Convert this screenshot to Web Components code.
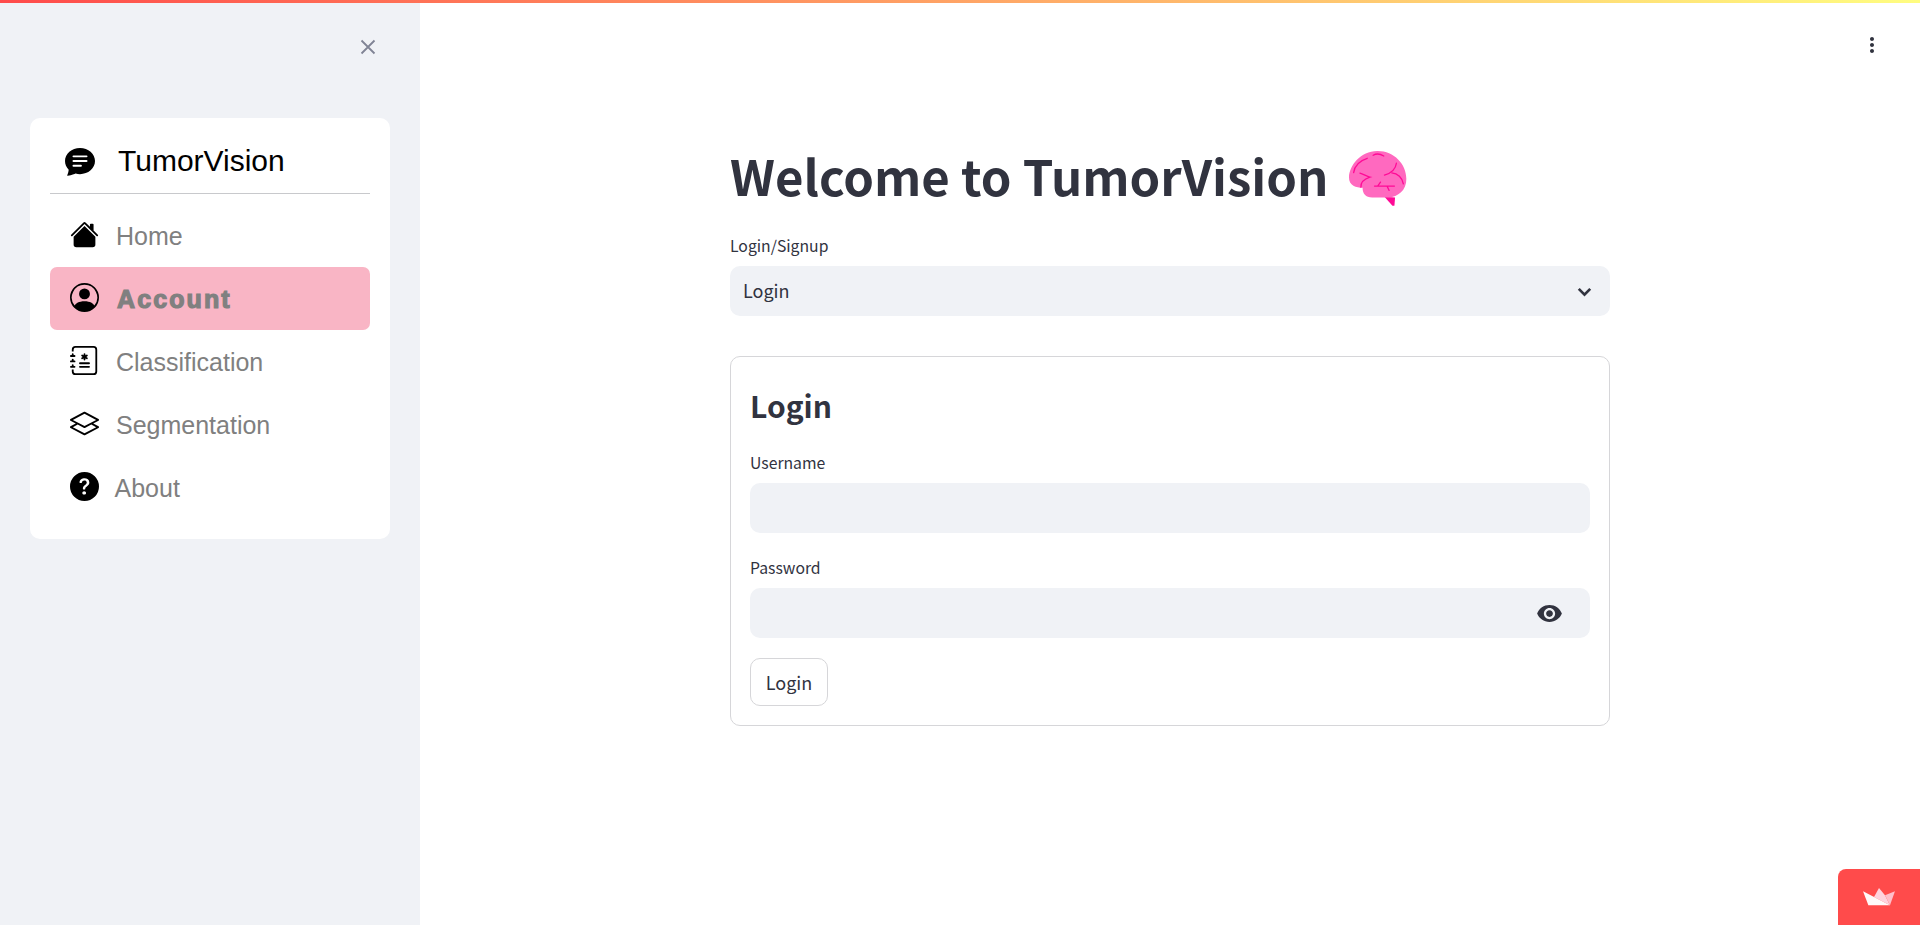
<!DOCTYPE html>
<html lang="en">
<head>
<meta charset="utf-8">
<title>TumorVision</title>
<style>
  html, body { margin: 0; height: 100%; overflow: hidden; background: #fff; }
  body { font-family: "Noto Sans CJK SC", "Liberation Sans", sans-serif; color: #31333f; }
</style>
</head>
<body>
<st-app>
  <option-menu slot="sidebar" title="TumorVision">
    <nav-item icon="house">Home</nav-item>
    <nav-item icon="account" active>Account</nav-item>
    <nav-item icon="journal">Classification</nav-item>
    <nav-item icon="layers">Segmentation</nav-item>
    <nav-item icon="question" tight>About</nav-item>
  </option-menu>

  <main-title>Welcome to TumorVision</main-title>
  <st-select label="Login/Signup" value="Login"></st-select>
  <st-form title="Login">
    <st-field label="Username"></st-field>
    <st-field label="Password" type="password"></st-field>
    <st-button>Login</st-button>
  </st-form>
</st-app>

<script>
(function() {
  // bootstrap-icons paths, 16x16
  let icons = {
    chat: '<path d="M16 8c0 3.866-3.582 7-8 7a9.06 9.06 0 0 1-2.347-.306c-.584.296-1.925.864-4.181 1.234-.2.032-.352-.176-.273-.362.354-.836.674-1.95.77-2.966C.744 11.37 0 9.76 0 8c0-3.866 3.582-7 8-7s8 3.134 8 7zM4.5 5a.5.5 0 0 0 0 1h7a.5.5 0 0 0 0-1h-7zm0 2.5a.5.5 0 0 0 0 1h7a.5.5 0 0 0 0-1h-7zm0 2.5a.5.5 0 0 0 0 1h4a.5.5 0 0 0 0-1h-4z"/>',
    house: '<path d="M8.707 1.5a1 1 0 0 0-1.414 0L.646 8.146a.5.5 0 0 0 .708.708L8 2.207l6.646 6.647a.5.5 0 0 0 .708-.708L13 5.793V2.5a.5.5 0 0 0-.5-.5h-1a.5.5 0 0 0-.5.5v1.293L8.707 1.5Z"/><path d="m8 3.293 6 6V13.5a1.5 1.5 0 0 1-1.5 1.5h-9A1.5 1.5 0 0 1 2 13.5V9.293l6-6Z"/>',
    account: '<path d="M11 6a3 3 0 1 1-6 0 3 3 0 0 1 6 0z"/><path fill-rule="evenodd" d="M0 8a8 8 0 1 1 16 0A8 8 0 0 1 0 8zm8-7a7 7 0 0 0-5.468 11.37C3.242 11.226 4.805 10 8 10s4.757 1.225 5.468 2.37A7 7 0 0 0 8 1z"/>',
    journal: '<path fill-rule="evenodd" d="M8 4a.5.5 0 0 1 .5.5v.634l.549-.317a.5.5 0 1 1 .5.866L9 6l.549.317a.5.5 0 1 1-.5.866L8.5 6.866V7.5a.5.5 0 0 1-1 0v-.634l-.549.317a.5.5 0 1 1-.5-.866L7 6l-.549-.317a.5.5 0 0 1 .5-.866l.549.317V4.5A.5.5 0 0 1 8 4zM5 9.5a.5.5 0 0 1 .5-.5h5a.5.5 0 0 1 0 1h-5a.5.5 0 0 1-.5-.5zm0 2a.5.5 0 0 1 .5-.5h5a.5.5 0 0 1 0 1h-5a.5.5 0 0 1-.5-.5z"/><path d="M3 0h10a2 2 0 0 1 2 2v12a2 2 0 0 1-2 2H3a2 2 0 0 1-2-2v-1h1v1a1 1 0 0 0 1 1h10a1 1 0 0 0 1-1V2a1 1 0 0 0-1-1H3a1 1 0 0 0-1 1v1H1V2a2 2 0 0 1 2-2z"/><path d="M1 5v-.5a.5.5 0 0 1 1 0V5h.5a.5.5 0 0 1 0 1h-2a.5.5 0 0 1 0-1H1zm0 3v-.5a.5.5 0 0 1 1 0V8h.5a.5.5 0 0 1 0 1h-2a.5.5 0 0 1 0-1H1zm0 3v-.5a.5.5 0 0 1 1 0v.5h.5a.5.5 0 0 1 0 1h-2a.5.5 0 0 1 0-1H1z"/>',
    layers: '<path d="M8.235 1.559a.5.5 0 0 0-.47 0l-7.5 4a.5.5 0 0 0 0 .882L3.188 8 .264 9.559a.5.5 0 0 0 0 .882l7.5 4a.5.5 0 0 0 .47 0l7.5-4a.5.5 0 0 0 0-.882L12.813 8l2.922-1.559a.5.5 0 0 0 0-.882l-7.5-4zm3.515 7.008L14.438 10 8 13.433 1.562 10 4.25 8.567l3.515 1.874a.5.5 0 0 0 .47 0l3.515-1.874zM8 9.433 1.562 6 8 2.567 14.438 6 8 9.433z"/>',
    question: '<path d="M16 8A8 8 0 1 1 0 8a8 8 0 0 1 16 0zM5.496 6.033h.825c.138 0 .248-.113.266-.25.09-.656.54-1.134 1.342-1.134.686 0 1.314.343 1.314 1.168 0 .635-.374.927-.965 1.371-.673.489-1.206 1.06-1.168 1.987l.003.217a.25.25 0 0 0 .25.246h.811a.25.25 0 0 0 .25-.25v-.105c0-.718.273-.927 1.01-1.486.609-.463 1.244-.977 1.244-2.056 0-1.511-1.276-2.241-2.673-2.241-1.267 0-2.655.59-2.75 2.286a.237.237 0 0 0 .241.247zm2.325 6.443c.61 0 1.029-.394 1.029-.927 0-.552-.42-.94-1.029-.94-.584 0-1.009.388-1.009.94 0 .533.425.927 1.01.927z"/>'
  };

  function define(name, html) {
    customElements.define(name, class extends HTMLElement {
      constructor() {
        super();
        this.attachShadow({mode: 'open'}).innerHTML = typeof html == 'function' ? html(this) : html;
      }
    });
  }

  define('st-app', `
    <style>
      :host { display: flex; flex-direction: column; height: 100vh; position: relative; }
      .bar { height: 3px; flex: none; background: linear-gradient(90deg, #ff4b4b, #fffd80); }
      .row { flex: 1; display: flex; min-height: 0; }
      aside { width: 420px; flex: none; box-sizing: border-box; background: #f0f2f6; padding: 32px 30px 0; }
      .close { display: flex; justify-content: flex-end; height: 83px; padding-right: 10px; }
      .close svg { width: 24px; height: 24px; fill: none; stroke: #808495; stroke-width: 1.8; }
      main { flex: 1; display: flex; justify-content: center; }
      .block { width: 880px; display: flex; flex-direction: column; }
      .menu { position: absolute; top: 33px; right: 36px; width: 24px; height: 24px; fill: #31333f; }
      .badge { position: absolute; right: 0; bottom: 0; width: 82px; height: 56px; background: #ff4b4b; border-top-left-radius: 8px; display: flex; align-items: center; justify-content: center; }
      .badge svg { width: 32px; height: 17.3px; }
    </style>
    <div class="bar"></div>
    <div class="row">
      <aside>
        <div class="close"><svg viewBox="0 0 24 24"><path d="M5.5 5.5 18.5 18.5M18.5 5.5 5.5 18.5"/></svg></div>
        <slot name="sidebar"></slot>
      </aside>
      <main><div class="block"><slot></slot></div></main>
    </div>
    <svg class="menu" viewBox="0 0 24 24"><path d="M12 8c1.1 0 2-.9 2-2s-.9-2-2-2-2 .9-2 2 .9 2 2 2zm0 2c-1.1 0-2 .9-2 2s.9 2 2 2 2-.9 2-2-.9-2-2-2zm0 6c-1.1 0-2 .9-2 2s.9 2 2 2 2-.9 2-2-.9-2-2-2z"/></svg>
    <div class="badge">
      <svg viewBox="189 131 96 52">
        <path d="M237 131 222 158 270 183 255 153z" fill="#ffd3de"/>
        <path d="M285 141 270 183 255 153z" fill="#ffbfca"/>
        <path d="M189 141 205 183H270z" fill="#fff" fill-opacity=".97"/>
      </svg>
    </div>
  `);

  define('option-menu', el => `
    <style>
      :host { display: block; background: #fff; border-radius: 10px; padding: 20px; font-family: "Liberation Sans", Arial, sans-serif; }
      .title { display: flex; align-items: center; height: 45px; padding: 0 0 10px 15px; border-bottom: 1px solid #c8c9cc; margin-bottom: 10px; color: #000; font-size: 30px; }
      .title svg { width: 30px; height: 30px; fill: #000; margin-right: 23px; }
    </style>
    <div class="title"><svg viewBox="0 0 16 16">${icons.chat}</svg><span>${el.getAttribute('title')}</span></div>
    <slot></slot>
  `);

  define('nav-item', el => `
    <style>
      :host { display: flex; align-items: center; height: 63px; box-sizing: border-box; padding: 2px 0 0 20px; border-radius: 7px; font-size: 25px; color: #808080; }
      :host([active]) { background: #f9b5c5; font-weight: 700; -webkit-text-stroke: 1.2px #808080; letter-spacing: 2.1px; }
      svg { width: 29px; height: 29px; fill: #000; margin: -5px 17px 0 0; flex: none; }
      :host([active]) svg { margin-right: 18px; }
      :host([tight]) svg { margin-right: 15.5px; }
    </style>
    <svg viewBox="0 0 16 16">${icons[el.getAttribute('icon')]}</svg><slot></slot>
  `);

  define('main-title', `
    <style>
      :host { display: flex; align-items: center; height: 100px; margin-top: 122px; font-size: 49.1px; font-weight: 700; line-height: 1.2; color: #31333f; }
      svg { width: 62px; height: 58px; margin: 6px 0 0 18.5px; flex: none; }
    </style>
    <slot></slot>
    <svg viewBox="80 55 185 175">
      <path d="M192 199 224 201 222 226 216 226z" fill="#ff0a96"/>
      <path d="M85 140C86 105 120 61 170 61C220 60 258 100 258 145C259 180 232 200 205 201H155C135 201 126 190 126 172C108 172 84 165 85 140z" fill="#ff69bf"/>
      <g fill="none" stroke="#ff0a96" stroke-width="4" stroke-linecap="round">
        <path d="M158 74Q172 65 190 76"/>
        <path d="M140 83C118 90 102 105 99 126"/>
        <path d="M118 128C128 130 138 138 148 140C130 146 120 155 121 170"/>
        <path d="M228 98C226 115 212 128 192 134"/>
        <path d="M214 127C232 128 246 142 249 160"/>
        <path d="M162 167H222M180 155 172 166M200 167 206 180"/>
      </g>
    </svg>
  `);

  let fieldStyle = `
    label { display: block; font-size: 15.75px; line-height: 30px; margin-bottom: 5px; color: #31333f; }
    .box { height: 50px; box-sizing: border-box; background: #f0f2f6; border-radius: 10px; display: flex; align-items: center; }
    svg { flex: none; }
  `;

  define('st-select', el => `
    <style>
      :host { display: block; margin-top: 6px; }
      ${fieldStyle}
      .box { padding: 0 14px 2px 13px; font-size: 18px; justify-content: space-between; }
      svg { width: 25px; height: 25px; margin: 2px -1px 0 0; fill: none; stroke: #31333f; stroke-width: 2.6; }
    </style>
    <label>${el.getAttribute('label')}</label>
    <div class="box"><span>${el.getAttribute('value')}</span>
      <svg viewBox="0 0 24 24"><path d="M6.5 9.5 12 15 17.5 9.5"/></svg></div>
  `);

  define('st-field', el => `
    <style>
      :host { display: block; margin-bottom: 20px; }
      ${fieldStyle}
      input { flex: 1; min-width: 0; height: 100%; border: 0; outline: 0; background: transparent; padding: 0 13px; font: inherit; }
      svg { width: 27px; height: 27px; margin-right: 27px; fill: #31333f; }
    </style>
    <label>${el.getAttribute('label')}</label>
    <div class="box"><input type="${el.getAttribute('type') || 'text'}">${el.getAttribute('type') == 'password' ? '<svg viewBox="0 0 24 24"><path d="M12 4.5C7 4.5 2.73 7.61 1 12c1.73 4.39 6 7.5 11 7.5s9.27-3.11 11-7.5c-1.73-4.39-6-7.5-11-7.5zM12 17c-2.76 0-5-2.24-5-5s2.24-5 5-5 5 2.24 5 5-2.24 5-5 5zm0-8c-1.66 0-3 1.34-3 3s1.34 3 3 3 3-1.34 3-3-1.34-3-3-3z"/></svg>' : ''}</div>
  `);

  define('st-form', el => `
    <style>
      :host { display: block; margin-top: 40px; box-sizing: border-box; border: 1px solid #d6d6d9; border-radius: 10px; padding: 23px 19px 19px; height: 370px; }
      h2 { margin: 0 0 18px; font-size: 30px; font-weight: 600; line-height: 50px; color: #31333f; }
    </style>
    <h2>${el.getAttribute('title')}</h2>
    <slot></slot>
  `);

  define('st-button', `
    <style>
      :host { display: inline-flex; align-items: center; justify-content: center; box-sizing: border-box; height: 48px; width: 78px; border: 1px solid #d6d6d9; border-radius: 10px; background: #fff; font-size: 18px; color: #31333f; }
    </style>
    <slot></slot>
  `);
})();
</script>
</body>
</html>
